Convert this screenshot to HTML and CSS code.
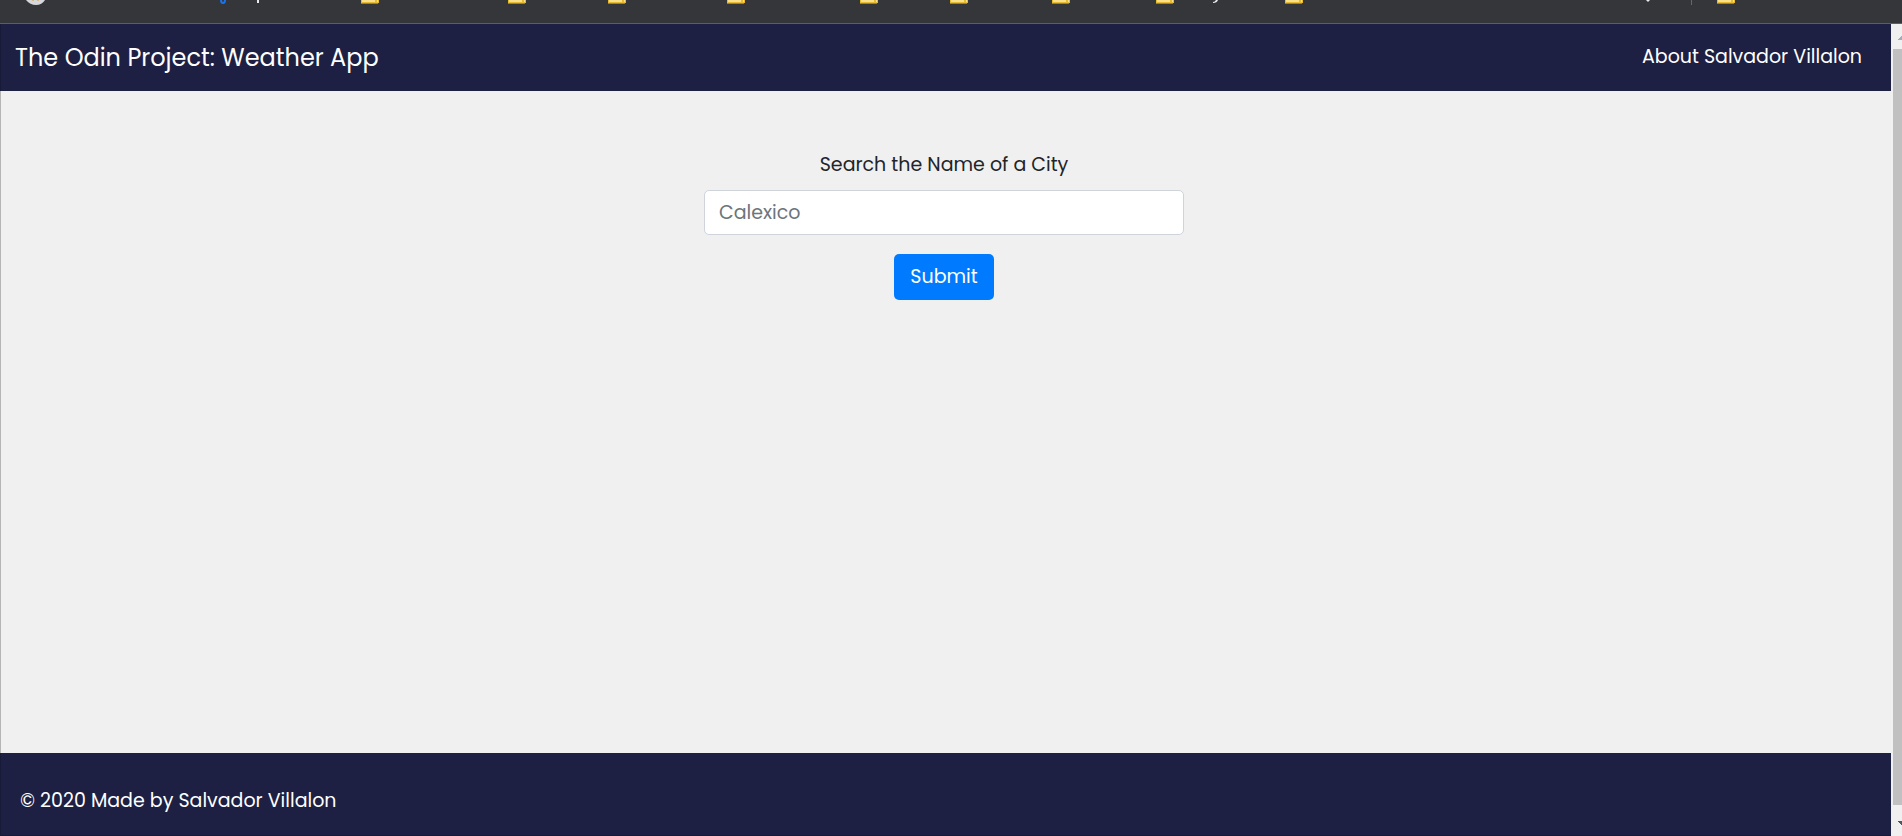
FILE: index.html
```
<!DOCTYPE html>
<html lang="en">
<head>
<meta charset="utf-8">
<title>The Odin Project: Weather App</title>
<link rel="stylesheet" href="styles.css">
</head>
<body>
<div class="bookmarks">
  <svg class="bookmark-icons" width="1902" height="6" aria-hidden="true">
    <defs>
      <g id="folder"><path fill="#e8bb35" d="M0 0h18v3H0z"/><path fill="#fbe08c" d="M1 0h13v2H1zM16 0h1v2h-1z"/><path fill="#a5841f" d="M0 3h17v1H0z"/></g>
    </defs>
    <path fill="#d5d7dc" d="M26 0h19q-3 5-9 5t-10-5z"/><path fill="#d9b98c" d="M32 0h2v1h-2zM37 0h2v1h-2z"/>
    <path fill="none" stroke="#1a73e8" stroke-width="2" d="M221 0q0 3 2 3t2-3"/>
    <path fill="#e8eaed" d="M257 0h2v3h-2zM1216 0h2q-1 3-5 3v-1q2 0 3-2zM1646 0h4l-2 2z"/>
    <path fill="#65676b" d="M1691 0h1v5h-1z"/>
    <use href="#folder" x="361"/><use href="#folder" x="508"/><use href="#folder" x="608"/><use href="#folder" x="727"/><use href="#folder" x="860"/><use href="#folder" x="950"/><use href="#folder" x="1052"/><use href="#folder" x="1156"/><use href="#folder" x="1285"/><use href="#folder" x="1717"/>
  </svg>
</div>
<div class="viewport">
  <div class="page">
    <nav class="navbar">
      <a class="brand" href="#">The Odin Project: Weather App</a>
      <a class="nav-link" href="#">About Salvador Villalon</a>
    </nav>
    <main class="content">
      <form class="search">
        <label class="search-label" for="city">Search the Name of a City</label>
        <input class="search-input" id="city" type="text" placeholder="Calexico">
        <button class="search-button" type="button">Submit</button>
      </form>
    </main>
    <footer class="footer">© 2020 Made by Salvador Villalon</footer>
  </div>
  <div class="scrollbar" aria-hidden="true">
    <svg class="arrow" width="9" height="25"><path fill="#a3acb8" d="M5 16v-1h1v-1h1v-1h1v-1h1v4z"/></svg>
    <div class="thumb"></div>
    <svg class="arrow" width="9" height="31"><path fill="#505760" d="M5 16h4v4H8v-1H7v-1H6v-1H5z"/></svg>
  </div>
</div>
</body>
</html>
```
FILE: styles.css
```
* {
  box-sizing: border-box;
}

body {
  margin: 0;
  min-height: 100vh;
  display: flex;
  flex-direction: column;
  background: #f0f0f0;
  font-family: Poppins, Inter, "Open Sans", sans-serif;
  font-size: 19px;
  line-height: 28px;
  color: #212529;
}

.bookmarks {
  height: 24px;
  overflow: hidden;
  background: #35363a;
  border-bottom: 1px solid #5c5e62;
}

.bookmark-icons {
  display: block;
}

.viewport {
  flex: 1;
  display: flex;
}

.page {
  flex: 1;
  display: flex;
  flex-direction: column;
}

.navbar {
  display: flex;
  justify-content: space-between;
  align-items: flex-start;
  padding: 16px 29px 16px 14px;
  background: #1d2042;
  border-left: 1px solid #181b37;
}

.brand,
.nav-link {
  color: #fff;
  text-decoration: none;
}

.brand {
  font-size: 24px;
  line-height: 35px;
}

.nav-link {
  line-height: 34px;
}

.content {
  flex: 1;
  padding: 60px 20px 60px 16px;
  border-left: 1px solid #b5b5b5;
}

.search {
  display: flex;
  flex-direction: column;
  align-items: center;
}

.search-label {
  margin-bottom: 11px;
}

.search-input {
  width: 100%;
  max-width: 480px;
  height: 45px;
  margin-bottom: 19px;
  padding: 0 14px;
  border: 1px solid #ced4da;
  border-radius: 5px;
  background: #fff;
  font: inherit;
  color: #495057;
}

.search-input::placeholder {
  color: #6c757d;
  opacity: 1;
}

.search-button {
  padding: 9px 16px;
  border: 0;
  border-radius: 5px;
  background: #007bff;
  color: #fff;
  font: inherit;
}

.footer {
  padding: 34px 19px 20px;
  background: #1d2042;
  border-left: 1px solid #181b37;
  border-bottom: 1px solid #181b37;
  color: #fff;
}

.scrollbar {
  width: 11px;
  padding-left: 2px;
  display: flex;
  flex-direction: column;
  background: #f0f0f0;
}

.thumb {
  flex: 1;
  background: #c0c0c0;
}

.arrow {
  display: block;
}
```
